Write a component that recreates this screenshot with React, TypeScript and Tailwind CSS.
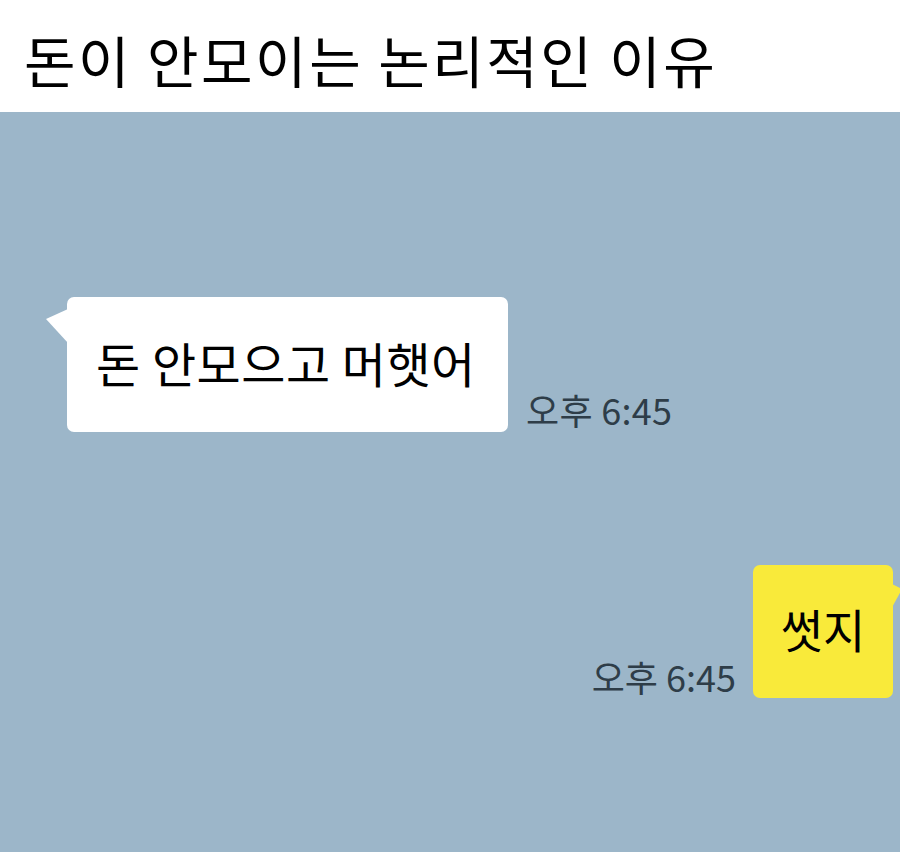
const font = { fontFamily: '"Noto Sans CJK KR", "Noto Sans", sans-serif' };

function IncomingBubble({ text, time }: { text: string; time: string }) {
  return (
    <div className="flex items-end pl-[67px]">
      <div className="relative flex h-[135px] w-[441px] items-center rounded-[7px] bg-white pl-[29px]">
        <svg className="absolute left-[-21px] top-[12px]" width="24" height="34" viewBox="0 0 24 34">
          <path d="M22 0 L0 10 L22 34 Z" fill="#ffffff" />
        </svg>
        <span className="pb-[6px] text-[48px] leading-none tracking-[0.5px] text-black">{text}</span>
      </div>
      <span className="mb-[5px] ml-[18px] text-[36px] leading-none tracking-[0.3px] text-[#2e3d48]">{time}</span>
    </div>
  );
}

function OutgoingBubble({ text, time }: { text: string; time: string }) {
  return (
    <div className="flex items-end justify-end pr-[7px]">
      <span className="mb-[4px] mr-[17px] text-[36px] leading-none text-[#2e3d48]">{time}</span>
      <div className="relative flex h-[133px] w-[140px] items-center justify-center rounded-[7px] bg-[#f9ea3a]">
        <svg className="absolute right-[-9px] top-[18px]" width="12" height="28" viewBox="0 0 12 28">
          <path d="M0 0 L12 6 L0 28 Z" fill="#f9ea3a" />
        </svg>
        <span className="pb-[8px] text-[46px] leading-none text-black">{text}</span>
      </div>
    </div>
  );
}

export default function App() {
  return (
    <div className="flex h-[852px] w-[900px] flex-col overflow-hidden bg-white" style={font}>
      <header className="flex h-[112px] items-center pl-[24px] pt-[6px]">
        <h1 className="text-[56px] font-normal leading-none tracking-[2.5px] text-black">돈이 안모이는 논리적인 이유</h1>
      </header>
      <main className="flex flex-1 flex-col bg-[#9cb6c9] pt-[185px]">
        <IncomingBubble text="돈 안모으고 머햇어" time="오후 6:45" />
        <div className="mt-[133px]">
          <OutgoingBubble text="썻지" time="오후 6:45" />
        </div>
      </main>
    </div>
  );
}
